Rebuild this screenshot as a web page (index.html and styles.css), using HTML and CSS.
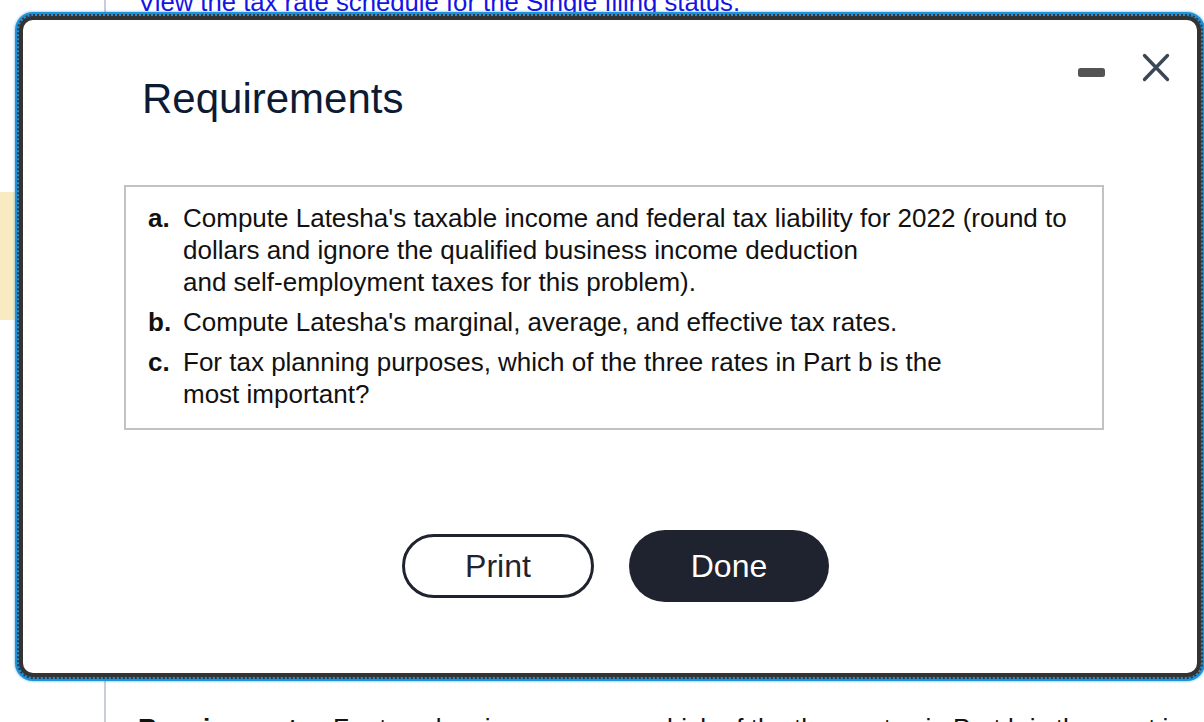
FILE: index.html
```html
<!DOCTYPE html>
<html lang="en">
<head>
    <meta charset="UTF-8">
    <meta name="viewport" content="width=device-width, initial-scale=1.0">
    <title>Requirements</title>
    <link rel="stylesheet" href="styles.css">
</head>
<body>
    <!-- Page behind the dialog -->
    <div class="page">
        <div class="gutter">
            <div class="marker"></div>
        </div>
        <div class="content">
            <a href="#" class="schedule-link">View the tax rate schedule for the Single filing status.</a>
            <p class="req-line"><b>Requirement c.</b> For tax planning purposes, which of the three rates in Part b is the most important?</p>
        </div>
    </div>

    <!-- Requirements dialog -->
    <div class="dialog">
        <div class="dialog-head">
            <h2 class="dialog-title">Requirements</h2>
            <div class="dialog-controls">
                <svg class="icon-min" width="27" height="9" viewBox="0 0 27 9">
                    <rect x="0" y="0" width="27" height="9" rx="2.5" fill="#545454"/>
                </svg>
                <svg class="icon-close" width="28" height="29" viewBox="0 0 28 29">
                    <path d="M2.5 2.5 L25.5 26.5 M25.5 2.5 L2.5 26.5" stroke="#3b4757" stroke-width="3.4" stroke-linecap="round" fill="none"/>
                </svg>
            </div>
        </div>

        <div class="dialog-body">
            <div class="req-box">
                <div class="req-item">
                    <span class="req-label">a.</span>
                    <span>Compute Latesha's taxable income and federal tax liability for 2022 (round to<br>dollars and ignore the qualified business income deduction<br>and self-employment taxes for this problem).</span>
                </div>
                <div class="req-item">
                    <span class="req-label">b.</span>
                    <span>Compute Latesha's marginal, average, and effective tax rates.</span>
                </div>
                <div class="req-item">
                    <span class="req-label">c.</span>
                    <span>For tax planning purposes, which of the three rates in Part b is the<br>most important?</span>
                </div>
            </div>

            <div class="actions">
                <button class="btn btn-print">Print</button>
                <button class="btn btn-done">Done</button>
            </div>
        </div>
    </div>
</body>
</html>
```

FILE: styles.css
```css
* {
    margin: 0;
    padding: 0;
    box-sizing: border-box;
}

body {
    font-family: 'Liberation Sans', Arial, Helvetica, sans-serif;
    color: #111;
    background: #fff;
    width: 1204px;
    height: 722px;
    overflow: hidden;
    position: relative;
}

/* Page behind */
.page {
    display: flex;
    height: 760px;
}

.gutter {
    width: 106px;
    border-right: 2px solid #c9cddb;
    flex-shrink: 0;
}

.marker {
    margin-top: 192px;
    width: 40px;
    height: 128px;
    background: #f8eac1;
}

.content {
    padding-left: 32px;
    font-size: 26px;
    line-height: 32px;
}

.schedule-link {
    display: block;
    margin-top: -14px;
    font-size: 25.7px;
    color: #1414e6;
    text-decoration: underline;
    white-space: nowrap;
}

.req-line {
    margin-top: 694px;
    white-space: nowrap;
}

/* Dialog */
.dialog {
    position: absolute;
    left: 19px;
    top: 16px;
    width: 1182px;
    height: 661px;
    background: #fff;
    border: 4px solid #333;
    border-radius: 14px;
    outline: 2px dotted #34383e;
    box-shadow: 0 0 0 4px #1d92d8, 0 0 2px 5px rgba(29, 146, 216, 0.35);
}

.dialog-head {
    display: flex;
    justify-content: space-between;
    align-items: flex-start;
    padding: 33px 27px 0 119px;
}

.dialog-title {
    margin-top: 25px;
    font-size: 42px;
    line-height: 42px;
    font-weight: normal;
    color: #0d1a33;
}

.dialog-controls {
    display: flex;
    align-items: flex-start;
    gap: 37px;
}

.icon-min {
    margin-top: 15px;
}

.dialog-body {
    padding-left: 101px;
}

.req-box {
    width: 980px;
    margin-top: 65px;
    padding: 15px 20px 18px 22px;
    border: 2px solid #c2c2c2;
    font-size: 26px;
    line-height: 32px;
    color: #111;
}

.req-item {
    display: grid;
    grid-template-columns: 35px 1fr;
}

.req-item + .req-item {
    margin-top: 8px;
}

.req-label {
    font-weight: bold;
}

.actions {
    width: 980px;
    margin-top: 100px;
    padding-left: 3px;
    display: flex;
    justify-content: center;
    align-items: center;
    gap: 35px;
}

.btn {
    font-family: inherit;
    font-size: 32px;
    cursor: pointer;
}

.btn-print {
    width: 192px;
    height: 64px;
    background: #fff;
    color: #1f2330;
    border: 3px solid #1f2330;
    border-radius: 32px;
}

.btn-done {
    width: 200px;
    height: 72px;
    background: #1f2330;
    color: #fff;
    border: none;
    border-radius: 36px;
}
```
